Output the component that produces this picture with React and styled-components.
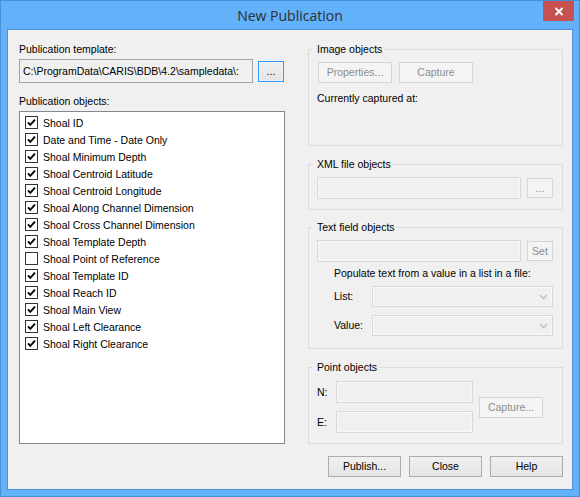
import React from 'react';
import styled, { createGlobalStyle } from 'styled-components';

const Global = createGlobalStyle`
  html, body { margin: 0; padding: 0; }
  body {
    font-family: "Liberation Sans", Arial, sans-serif;
    font-size: 10.5px;
    color: #000;
    background: #fff;
  }
  * { box-sizing: border-box; }
`;

const Window = styled.div`
  width: 580px;
  height: 497px;
  background: #62b1fb;
  border: 1px solid #4a8fd4;
  padding: 0 6px 6px;
  display: flex;
  flex-direction: column;
`;

const TitleBar = styled.div`
  height: 28px;
  margin: 0 -6px;
  padding: 0 5px;
  display: grid;
  grid-template-columns: 1fr auto 1fr;
  align-items: start;
`;

const Title = styled.div`
  grid-column: 2;
  font-family: "Open Sans", "Noto Sans", sans-serif;
  font-size: 14px;
  line-height: 20px;
  padding-top: 5px;
  color: #2e2e2e;
`;

const CloseButton = styled.div`
  grid-column: 3;
  justify-self: end;
  width: 31px;
  height: 20px;
  background: #c75050;
  display: flex;
  align-items: center;
  justify-content: center;
`;

const Client = styled.div`
  flex: 1;
  background: #f0f0f0;
  border: 1px solid #4f92d6;
  padding: 13px 9px 11px 11px;
  display: flex;
  flex-direction: column;
`;

const Main = styled.div`
  display: grid;
  grid-template-columns: 266px 255px;
  column-gap: 23px;
`;

const Column = styled.div`
  display: flex;
  flex-direction: column;
`;

const Label = styled.div`
  line-height: 13px;
  white-space: nowrap;
  margin-top: ${p => p.$mt || 0}px;
  padding-left: ${p => p.$indent || 0}px;
  color: #000;
`;

const Row = styled.div`
  display: flex;
  align-items: center;
  gap: ${p => p.$gap ?? 6}px;
  margin-top: ${p => p.$mt || 0}px;
  padding-left: ${p => p.$indent || 0}px;
`;

const TextBox = styled.div`
  height: ${p => p.$h || 22}px;
  width: ${p => (p.$w ? `${p.$w}px` : 'auto')};
  flex: ${p => (p.$w ? '0 0 auto' : '1 1 0')};
  min-width: 0;
  background: #f0f0f0;
  border: 1px solid ${p => (p.$disabled ? '#d9d9d9' : '#a5a5a5')};
  box-shadow: ${p => (p.$disabled ? 'inset 0 0 0 1px #f7f7f7' : 'none')};
  padding: 0 3px;
  line-height: ${p => (p.$h || 22) - 2}px;
  white-space: nowrap;
  overflow: hidden;
`;

const Button = styled.button`
  width: ${p => p.$w}px;
  height: ${p => p.$h || 21}px;
  flex: 0 0 auto;
  padding: 0;
  margin: 0;
  font: inherit;
  line-height: 1;
  border: 1px solid ${p => (p.$focus ? '#3399ff' : p.disabled ? '#d5d5d5' : '#acacac')};
  background: ${p => (p.disabled ? '#f4f4f4' : 'linear-gradient(#f0f0f0, #e5e5e5)')};
  color: ${p => (p.disabled ? '#8d8d8d' : '#000')};
  box-shadow: ${p => (p.$focus ? 'inset 0 0 0 1px #f0f0f0' : 'none')};
  outline: none;
`;

const ListBox = styled.div`
  margin-top: 3px;
  height: 333px;
  background: #fff;
  border: 1px solid #828790;
  padding: 2px 0 0 5px;
`;

const ListItem = styled.div`
  height: 17px;
  display: flex;
  align-items: center;
  gap: 5px;
  white-space: nowrap;
`;

const CheckBox = styled.div`
  width: 13px;
  height: 13px;
  border: 1px solid #333;
  background: #fff;
  flex: 0 0 auto;
  display: flex;
  align-items: center;
  justify-content: center;
`;

const Group = styled.fieldset`
  margin: ${p => p.$mt || 0}px 0 0;
  padding: 0;
  border: 1px solid #dcdcdc;
  min-width: 0;
`;

const Legend = styled.legend`
  margin-left: 3px;
  padding: 0 1px 0 5px;
  line-height: 13px;
  height: 13px;
  white-space: nowrap;
`;

const GroupBody = styled.div`
  padding: ${p => p.$pt}px 9px ${p => p.$pb}px 8px;
  height: ${p => (p.$h ? `${p.$h}px` : 'auto')};
`;

const ComboBox = styled.div`
  flex: 1;
  height: 21px;
  border: 1px solid #d9d9d9;
  background: #f0f0f0;
  box-shadow: inset 0 0 0 1px #f7f7f7;
  display: flex;
  align-items: center;
  justify-content: flex-end;
  padding-right: 4px;
`;

const ComboLabel = styled.div`
  width: 38px;
  flex: 0 0 auto;
  line-height: 13px;
`;

const PointGrid = styled.div`
  display: grid;
  grid-template-columns: 13px 137px auto;
  grid-template-rows: 22px 22px;
  row-gap: 8px;
  column-gap: 6px;
  align-items: center;
`;

const PointCapture = styled(Button)`
  grid-column: 3;
  grid-row: 1 / span 2;
  align-self: center;
`;

const Footer = styled.div`
  margin-top: 12px;
  display: flex;
  justify-content: flex-end;
  gap: 8px;
`;

const items = [
  ['Shoal ID', true],
  ['Date and Time - Date Only', true],
  ['Shoal Minimum Depth', true],
  ['Shoal Centroid Latitude', true],
  ['Shoal Centroid Longitude', true],
  ['Shoal Along Channel Dimension', true],
  ['Shoal Cross Channel Dimension', true],
  ['Shoal Template Depth', true],
  ['Shoal Point of Reference', false],
  ['Shoal Template ID', true],
  ['Shoal Reach ID', true],
  ['Shoal Main View', true],
  ['Shoal Left Clearance', true],
  ['Shoal Right Clearance', true],
];

const Check = () => (
  <svg width="11" height="11" viewBox="0 0 11 11">
    <path d="M2 5.3 L4.3 7.8 L9 2.6" fill="none" stroke="#000" strokeWidth="1.9" />
  </svg>
);

const Chevron = () => (
  <svg width="9" height="6" viewBox="0 0 9 6">
    <path d="M1 1 L4.5 4.5 L8 1" fill="none" stroke="#c2c2c2" strokeWidth="1.6" />
  </svg>
);

export default function App() {
  return (
    <>
      <Global />
      <Window>
        <TitleBar>
          <Title>New Publication</Title>
          <CloseButton>
            <svg width="10" height="9" viewBox="0 0 10 9">
              <path d="M1.5 1 L8.5 8 M8.5 1 L1.5 8" stroke="#fff" strokeWidth="2" />
            </svg>
          </CloseButton>
        </TitleBar>
        <Client>
          <Main>
            <Column>
              <Label>Publication template:</Label>
              <Row $mt={3} $gap={5}>
                <TextBox $w={234} $h={24}>C:\ProgramData\CARIS\BDB\4.2\sampledata\:</TextBox>
                <Button $w={26} $h={21} $focus>...</Button>
              </Row>
              <Label $mt={12}>Publication objects:</Label>
              <ListBox>
                {items.map(([t, c]) => (
                  <ListItem key={t}>
                    <CheckBox>{c && <Check />}</CheckBox>
                    {t}
                  </ListItem>
                ))}
              </ListBox>
            </Column>
            <Column>
              <Group>
                <Legend>Image objects</Legend>
                <GroupBody $pt={6} $pb={0} $h={89}>
                  <Row $gap={7} style={{ marginLeft: 1 }}>
                    <Button $w={74} disabled>Properties...</Button>
                    <Button $w={74} disabled>Capture</Button>
                  </Row>
                  <Label $mt={9}>Currently captured at:</Label>
                </GroupBody>
              </Group>
              <Group $mt={12}>
                <Legend>XML file objects</Legend>
                <GroupBody $pt={6} $pb={10}>
                  <Row>
                    <TextBox $disabled />
                    <Button $w={26} $h={20} disabled>...</Button>
                  </Row>
                </GroupBody>
              </Group>
              <Group $mt={11}>
                <Legend>Text field objects</Legend>
                <GroupBody $pt={6} $pb={12}>
                  <Row>
                    <TextBox $disabled />
                    <Button $w={26} $h={20} disabled>Set</Button>
                  </Row>
                  <Label $mt={5} $indent={17}>Populate text from a value in a list in a file:</Label>
                  <Row $mt={6} $indent={17} $gap={0}>
                    <ComboLabel>List:</ComboLabel>
                    <ComboBox><Chevron /></ComboBox>
                  </Row>
                  <Row $mt={8} $indent={17} $gap={0}>
                    <ComboLabel>Value:</ComboLabel>
                    <ComboBox><Chevron /></ComboBox>
                  </Row>
                </GroupBody>
              </Group>
              <Group $mt={12}>
                <Legend>Point objects</Legend>
                <GroupBody $pt={7} $pb={10}>
                  <PointGrid>
                    <Label>N:</Label>
                    <TextBox $disabled />
                    <PointCapture $w={64} disabled>Capture...</PointCapture>
                    <Label>E:</Label>
                    <TextBox $disabled />
                  </PointGrid>
                </GroupBody>
              </Group>
            </Column>
          </Main>
          <Footer>
            <Button $w={73}>Publish...</Button>
            <Button $w={73}>Close</Button>
            <Button $w={73}>Help</Button>
          </Footer>
        </Client>
      </Window>
    </>
  );
}
